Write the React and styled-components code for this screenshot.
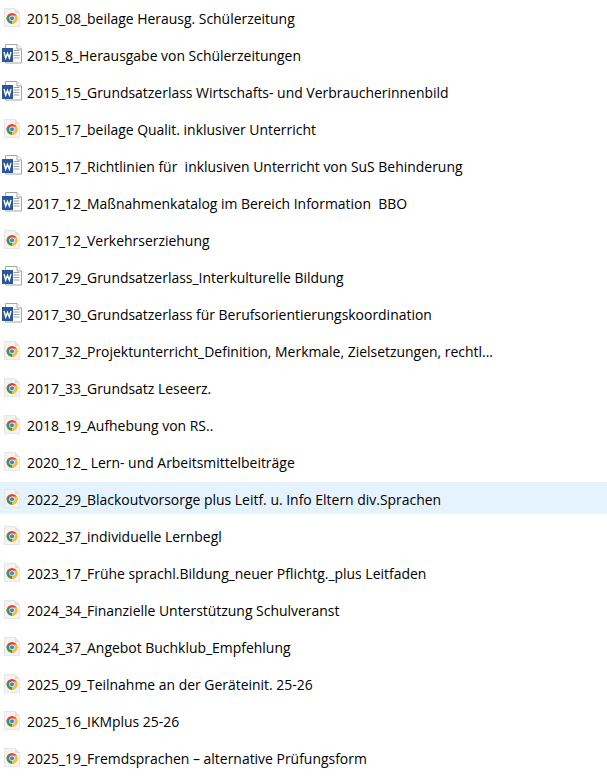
import styled, { createGlobalStyle } from "styled-components";

const GlobalStyle = createGlobalStyle`
  html, body {
    margin: 0;
    padding: 0;
    background: #fff;
    overflow: hidden;
  }
`;

const files = [
  ["chrome", "2015_08_beilage Herausg. Schülerzeitung"],
  ["word", "2015_8_Herausgabe von Schülerzeitungen"],
  ["word", "2015_15_Grundsatzerlass Wirtschafts- und Verbraucherinnenbild"],
  ["chrome", "2015_17_beilage Qualit. inklusiver Unterricht"],
  ["word", "2015_17_Richtlinien für  inklusiven Unterricht von SuS Behinderung"],
  ["word", "2017_12_Maßnahmenkatalog im Bereich Information  BBO"],
  ["chrome", "2017_12_Verkehrserziehung"],
  ["word", "2017_29_Grundsatzerlass_Interkulturelle Bildung"],
  ["word", "2017_30_Grundsatzerlass für Berufsorientierungskoordination"],
  ["chrome", "2017_32_Projektunterricht_Definition, Merkmale, Zielsetzungen, rechtl..."],
  ["chrome", "2017_33_Grundsatz Leseerz."],
  ["chrome", "2018_19_Aufhebung von RS.."],
  ["chrome", "2020_12_ Lern- und Arbeitsmittelbeiträge"],
  ["chrome", "2022_29_Blackoutvorsorge plus Leitf. u. Info Eltern div.Sprachen", true],
  ["chrome", "2022_37_individuelle Lernbegl"],
  ["chrome", "2023_17_Frühe sprachl.Bildung_neuer Pflichtg._plus Leitfaden"],
  ["chrome", "2024_34_Finanzielle Unterstützung Schulveranst"],
  ["chrome", "2024_37_Angebot Buchklub_Empfehlung"],
  ["chrome", "2025_09_Teilnahme an der Geräteinit. 25-26"],
  ["chrome", "2025_16_IKMplus 25-26"],
  ["chrome", "2025_19_Fremdsprachen – alternative Prüfungsform"],
];

const List = styled.div`
  display: flex;
  flex-direction: column;
  gap: 5px;
  width: 607px;
  height: 777px;
  padding-top: 1px;
  box-sizing: border-box;
  overflow: hidden;
  font-family: "Open Sans", "Noto Sans", sans-serif;
`;

const Row = styled.div`
  display: flex;
  align-items: center;
  flex: none;
  height: 32px;
  box-sizing: border-box;
  padding: 3px 0 0 2px;
  background: ${(props) => (props.$selected ? "#e5f3ff" : "transparent")};
`;

const Name = styled.span`
  margin-left: 5px;
  font-size: 13.95px;
  line-height: 29px;
  color: #000;
  white-space: pre;
`;

const IconBox = styled.svg`
  flex: none;
  display: block;
  margin-bottom: 4px;
`;

const ChromeIcon = () => (
  <IconBox width="20" height="20" viewBox="0 0 20 20">
    <path d="M2.5 1.5H13l4.5 4.5v13.5h-15z" fill="#f3f3f3" stroke="#e6e6e6" />
    <path d="M13 1.5V6h4.5z" fill="#dedede" />
    <circle cx="10" cy="11.3" r="5.4" fill="#db4437" />
    <path d="M10 11.3 5.32 14a5.4 5.4 0 0 1 0-5.4z" fill="#2f9e4f" />
    <path d="M5.32 14a5.4 5.4 0 0 0 4.68 2.7l2.7-4.2-2.7-1.2z" fill="#2f9e4f" />
    <path d="M10 16.7a5.4 5.4 0 0 0 4.68-8.1H10z" fill="#f7c02c" />
    <circle cx="10" cy="11.3" r="2.7" fill="#fff" />
    <circle cx="10" cy="11.3" r="2.1" fill="#3f7fe8" />
  </IconBox>
);

const WordIcon = () => (
  <IconBox width="20" height="20" viewBox="0 0 20 20">
    <path d="M3.5 0.5H15l4.5 4.5v14h-16z" fill="#fff" stroke="#a6a6a6" />
    <path d="M15 0.5V5h4.5" fill="#fff" stroke="#a6a6a6" />
    <path d="M11.5 6.5h6M11.5 9h6M11.5 11.5h6M11.5 14h6" stroke="#a0a0a0" />
    <rect x="0" y="4" width="11" height="14" fill="#2b5797" />
    <path d="M2 8 3.7 14 5.5 9.5 7.3 14 9 8" fill="none" stroke="#fff" strokeWidth="1.4" />
  </IconBox>
);

const App = () => (
  <>
    <GlobalStyle />
    <List>
      {files.map(([type, name, selected]) => (
        <Row key={name} $selected={selected}>
          {type === "word" ? <WordIcon /> : <ChromeIcon />}
          <Name>{name}</Name>
        </Row>
      ))}
    </List>
  </>
);

export default App;
